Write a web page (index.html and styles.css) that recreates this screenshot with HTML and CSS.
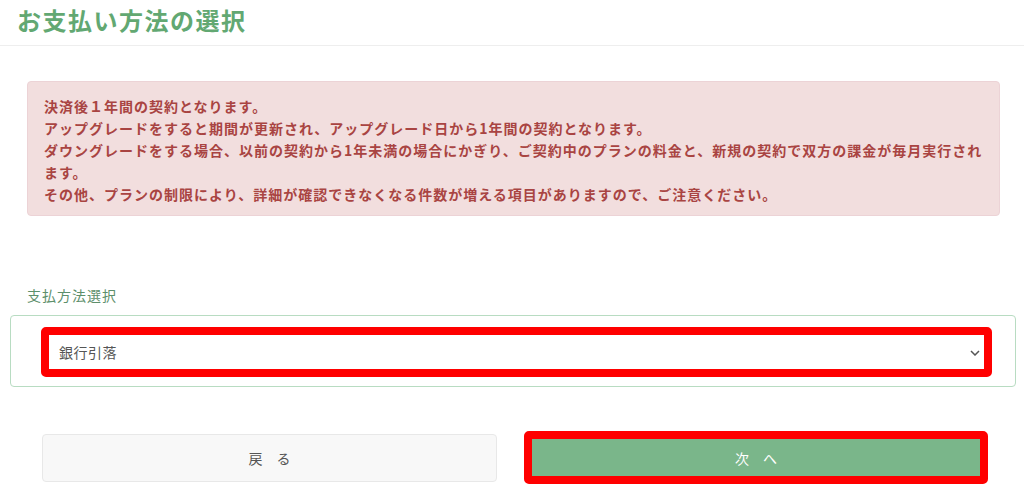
FILE: index.html
```html
<!DOCTYPE html>
<html lang="ja">
<head>
<meta charset="utf-8">
<title>お支払い方法の選択</title>
<link rel="stylesheet" href="styles.css">
</head>
<body>
<header class="page-header">
  <h1 class="page-title">お支払い方法の選択</h1>
</header>
<main class="content">
  <div class="alert">
    決済後１年間の契約となります。<br>
    アップグレードをすると期間が更新され、アップグレード日から1年間の契約となります。<br>
    ダウングレードをする場合、以前の契約から1年未満の場合にかぎり、ご契約中のプランの料金と、新規の契約で双方の課金が毎月実行されます。<br>
    その他、プランの制限により、詳細が確認できなくなる件数が増える項目がありますので、ご注意ください。
  </div>

  <label class="field-label" for="pay">支払方法選択</label>
  <div class="field-box">
    <div class="mark">
      <div class="select-wrap">
        <select id="pay" class="select">
          <option>銀行引落</option>
        </select>
        <svg class="chev" width="10" height="6" viewBox="0 0 10 6"><path d="M1 1l4 4 4-4" fill="none" stroke="#555" stroke-width="1.5"/></svg>
      </div>
    </div>
  </div>

  <div class="actions">
    <button class="btn btn-back" type="button">戻　る</button>
    <div class="mark mark-btn">
      <button class="btn btn-next" type="button">次　へ</button>
    </div>
  </div>
</main>
</body>
</html>
```
FILE: styles.css
```css
* { box-sizing: border-box; }
html, body { margin: 0; padding: 0; background: #fff; }
body {
  font-family: "Noto Sans CJK JP", "Noto Sans", sans-serif;
  font-size: 14px;
  color: #555;
}
.page-header {
  height: 46px;
  padding: 0 17px;
  border-bottom: 1px solid #eeeeee;
}
.page-title {
  margin: 0;
  font-size: 24px;
  line-height: 40px;
  font-weight: 700;
  letter-spacing: 1.5px;
  color: #62a872;
}
.content {
  padding: 35px 8px 0 10px;
}
.alert {
  margin: 0 16px 0 17px;
  background: #f2dede;
  border: 1px solid #ecd3d6;
  border-radius: 4px;
  color: #a94442;
  font-weight: 700;
  line-height: 22px;
  letter-spacing: 1px;
  padding: 13px 14px 10px 16px;
}
.field-label {
  display: block;
  margin: 69px 0 10px 17px;
  line-height: 20px;
  color: #5d8f6b;
  letter-spacing: 1px;
}
.field-box {
  border: 1px solid #b8dcc2;
  border-radius: 4px;
  padding: 11px 23px 9px 30px;
}
.mark {
  border: 8px solid #ff0000;
  border-radius: 5px;
}
.select-wrap {
  position: relative;
  height: 34px;
  background: #fff;
}
.select {
  appearance: none;
  -webkit-appearance: none;
  width: 100%;
  height: 34px;
  border: none;
  background: #fff;
  font-family: inherit;
  font-size: 14px;
  color: #555;
  letter-spacing: 0.5px;
  padding: 0 10px;
  outline: none;
}
.chev {
  position: absolute;
  right: 4px;
  top: 15px;
  pointer-events: none;
}
.actions {
  display: flex;
  align-items: center;
  gap: 27px;
  margin-top: 44px;
  padding-left: 32px;
}
.btn {
  font-family: inherit;
  font-size: 14px;
  cursor: pointer;
}
.btn-back {
  width: 455px;
  height: 48px;
  background: #f8f8f8;
  border: 1px solid #e8e8e8;
  border-radius: 4px;
  color: #555;
}
.mark-btn {
  width: 464px;
}
.btn-next {
  display: block;
  width: 100%;
  height: 37px;
  border: none;
  background: #7ab68a;
  color: #fff;
}
```
